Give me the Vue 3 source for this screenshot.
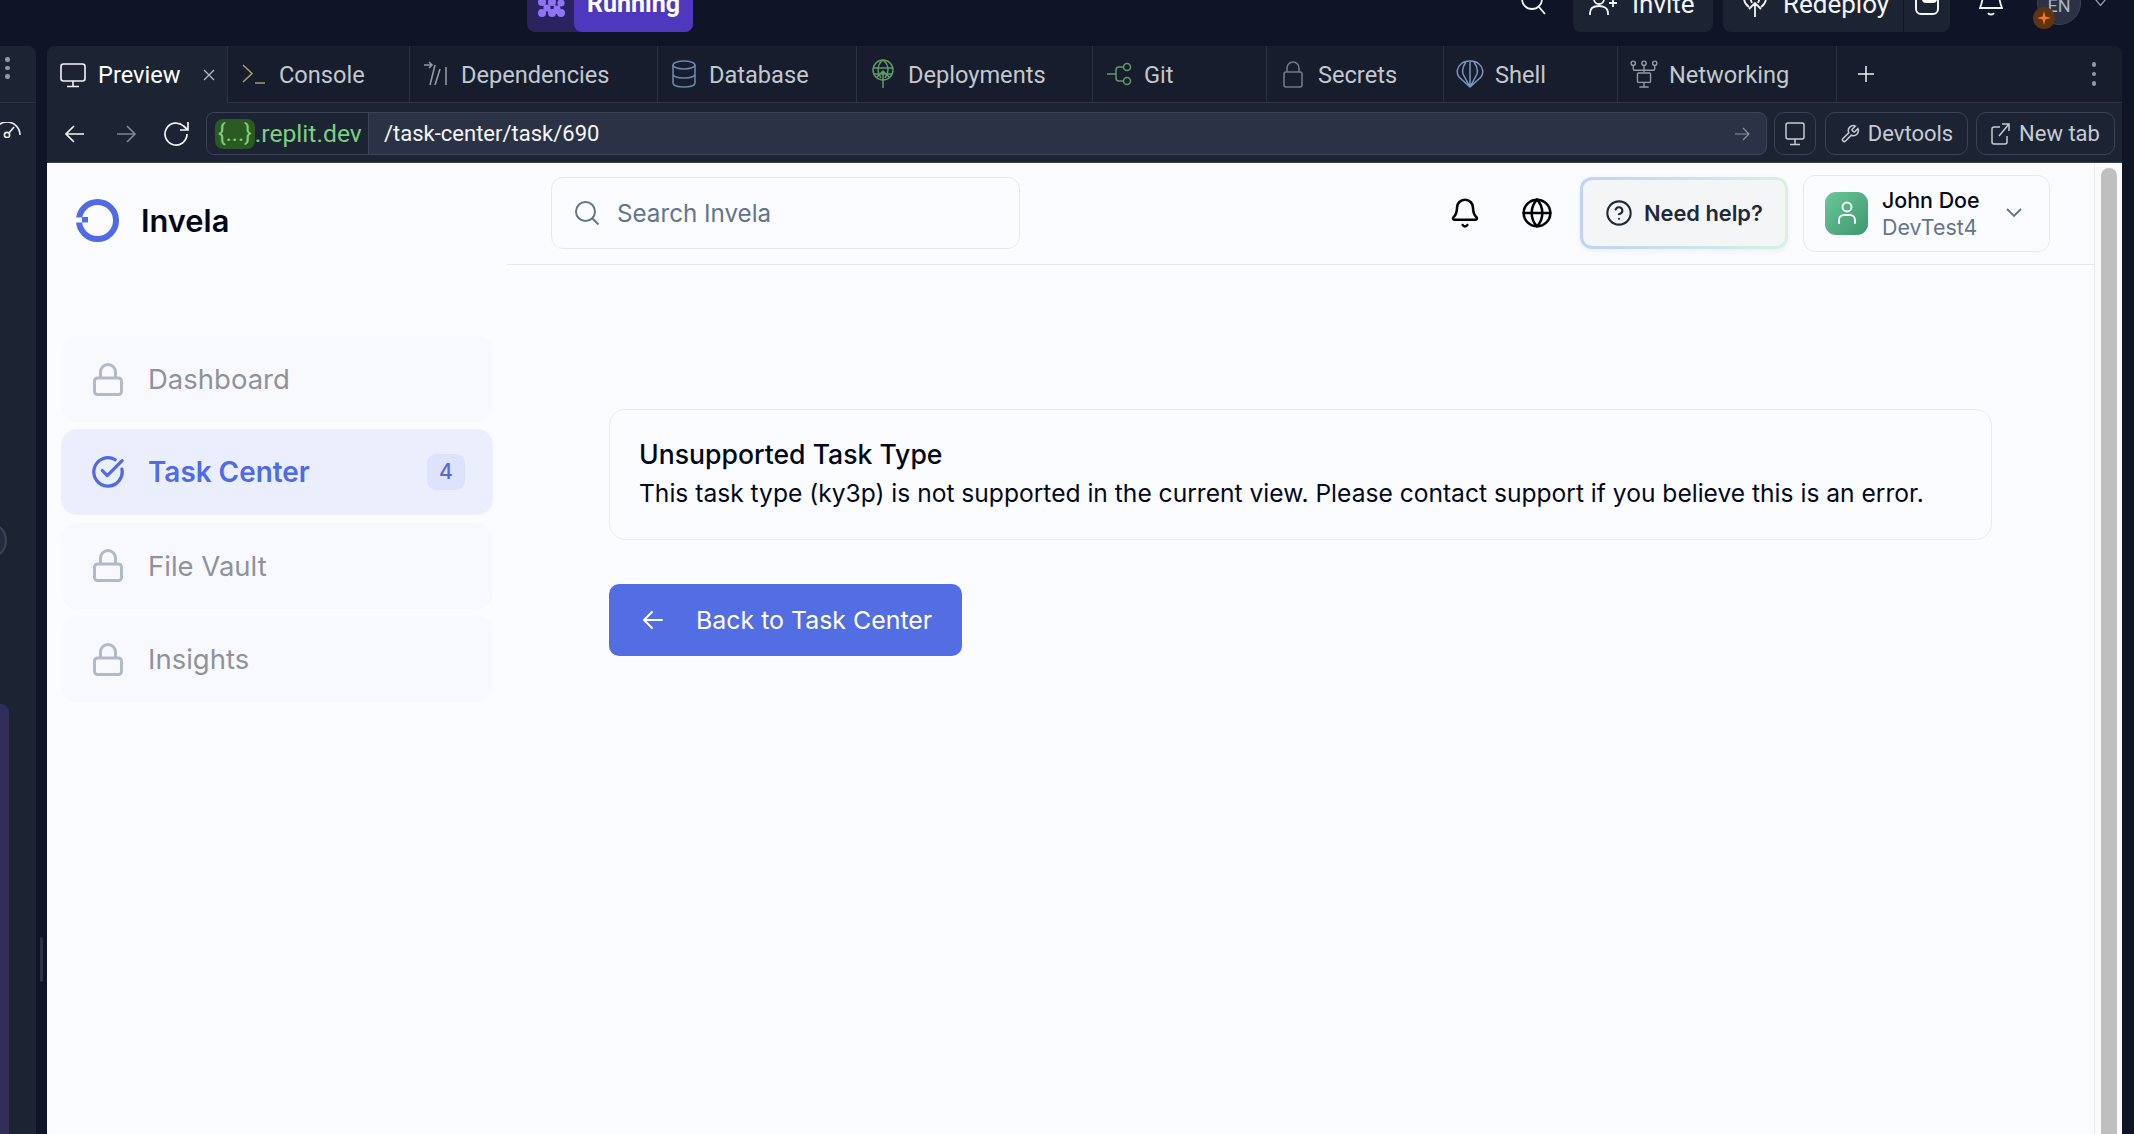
<script setup>
const tabs = [
  { name: 'Preview', icon: 'monitor', width: 181, active: true },
  { name: 'Console', icon: 'console', width: 182 },
  { name: 'Dependencies', icon: 'deps', width: 248 },
  { name: 'Database', icon: 'db', width: 199 },
  { name: 'Deployments', icon: 'deploy', width: 236 },
  { name: 'Git', icon: 'git', width: 174 },
  { name: 'Secrets', icon: 'lock', width: 177 },
  { name: 'Shell', icon: 'shell', width: 174 },
  { name: 'Networking', icon: 'net', width: 219 },
]

const navItems = [
  { name: 'Dashboard', locked: true },
  { name: 'Task Center', active: true, count: 4 },
  { name: 'File Vault', locked: true },
  { name: 'Insights', locked: true },
]
</script>

<template>
  <div class="page">
    <header class="topbar">
      <div class="run-btn">
        <span class="run-icon">
          <svg width="28" height="17" viewBox="0 0 28 17" fill="#8f74f5" stroke="#8f74f5" stroke-width="2">
            <circle cx="5" cy="2" r="3" /><circle cx="15" cy="2" r="3" /><circle cx="24" cy="3" r="2.600" />
            <path d="M5 2l5 6 5-6M15 2l5 7 4-6M10 8l-5 5M20 9l-5 4 9 0" fill="none" />
            <circle cx="10" cy="8" r="2.600" /><circle cx="20" cy="9" r="2.600" />
            <circle cx="5" cy="13" r="3" /><circle cx="15" cy="13" r="3" /><circle cx="24" cy="13" r="3" />
          </svg>
        </span>
        <span class="run-label">Running</span>
      </div>
      <div class="top-right">
        <svg class="top-search" width="28" height="28" viewBox="0 0 28 28" fill="none" stroke="#f2f4f7" stroke-width="1.800">
          <circle cx="12" cy="12" r="10" /><path d="m19 20 6 7" />
        </svg>
        <div class="top-btn invite">
          <svg width="30" height="20" viewBox="0 0 30 20" fill="none" stroke="#f2f4f7" stroke-width="1.800">
            <circle cx="11" cy="4" r="5" /><path d="M2 20v-2c0-5 4-7 9-7s9 2 9 7v2M21 8h8M25 4v8" />
          </svg>
          <span>Invite</span>
        </div>
        <div class="top-btn redeploy">
          <div class="redeploy-main">
            <svg width="24" height="19" viewBox="0 0 24 19" fill="none" stroke="#f2f4f7" stroke-width="1.800">
              <path d="M1 0c0 4 2 7 5 9M23 0c0 4-2 7-5 9M7 0l2 5M17 0l-2 5M12 19V5M6 11l6-6 6 6" />
            </svg>
            <span>Redeploy</span>
          </div>
          <div class="redeploy-side">
            <span class="blob-box"><i class="blob"></i></span>
          </div>
        </div>
        <svg class="top-bell" width="24" height="26" viewBox="0 0 24 26" fill="none" stroke="#f2f4f7" stroke-width="1.800">
          <path d="M4 3c0 6-1 10-3 15h22c-2-5-3-9-3-15M9 23c1 2 5 2 6 0" />
        </svg>
        <div class="en-avatar">
          <span>EN</span>
          <i class="en-badge">
            <svg width="14" height="14" viewBox="0 0 14 14" fill="#f5752b"><path d="M7 0 8.400 5.600 14 7 8.400 8.400 7 14 5.600 8.400 0 7 5.600 5.600Z" /></svg>
          </i>
        </div>
        <svg class="top-chev" width="11" height="7" viewBox="0 0 11 7" fill="none" stroke="#9aa3b2" stroke-width="1.200">
          <path d="m.5.500 5 6 5-6" />
        </svg>
      </div>
    </header>

    <div class="workspace">
      <aside class="rail">
        <div class="rail-head">
          <i></i><i></i><i></i>
        </div>
        <svg class="rail-gauge" width="22" height="16" viewBox="0 0 22 16" fill="none" stroke="#e6e8ec" stroke-width="1.700">
          <path d="M-6 13A13 13 0 0 1 20 13M9 11l5-6" />
          <circle cx="7" cy="13" r="2.600" />
        </svg>
        <div class="rail-circle"></div>
        <div class="rail-purple"></div>
      </aside>

      <div class="splitter"><i></i></div>

      <section class="panel">
        <div class="tabstrip">
          <div
            v-for="tab in tabs"
            :key="tab.name"
            :class="['tab', { 'tab--active': tab.active }]"
            :style="{ width: tab.width + 'px' }"
          >
            <span class="tab-icon">
              <svg v-if="tab.icon === 'monitor'" width="26" height="26" viewBox="0 0 26 26" fill="none" stroke="#f4f6f8" stroke-width="1.600">
                <rect x="1" y="2" width="24" height="17" rx="2.500" /><path d="M13 19v5M7 24.500h12" />
              </svg>
              <svg v-else-if="tab.icon === 'console'" width="24" height="24" viewBox="0 0 24 24" fill="none" stroke="#a89b62" stroke-width="1.600">
                <path d="m1 3 9 8.500L1 20M13 21h10" />
              </svg>
              <svg v-else-if="tab.icon === 'deps'" width="24" height="26" viewBox="0 0 24 26" fill="none" stroke="#9299a4" stroke-width="1.600">
                <path d="M0 4h8M5 1l3 3-3 3M11 4 6 24M16 8l-5 16M22 6v18" />
              </svg>
              <svg v-else-if="tab.icon === 'db'" width="26" height="28" viewBox="0 0 26 28" fill="none" stroke="#6787ab" stroke-width="1.600">
                <ellipse cx="13" cy="5" rx="11" ry="4" /><path d="M2 5v18c0 2.500 5 4 11 4s11-1.500 11-4V5M2 14c0 2.500 5 4 11 4s11-1.500 11-4" />
              </svg>
              <svg v-else-if="tab.icon === 'deploy'" width="24" height="30" viewBox="0 0 24 30" fill="none" stroke="#5f9b66" stroke-width="1.500">
                <circle cx="12" cy="11" r="10" /><path d="M12 1c-4 3-5 7-5 10s2 6 3 8M12 1c4 3 5 7 5 10s-2 6-3 8M2 9h20M3 15h18M12 12v17M6 18l6-6 6 6" />
              </svg>
              <svg v-else-if="tab.icon === 'git'" width="26" height="26" viewBox="0 0 26 26" fill="none" stroke="#5f9b66" stroke-width="1.500">
                <circle cx="21" cy="6" r="3.500" /><circle cx="21" cy="20" r="3.500" /><path d="M1 13h9M17.500 6H13a3 3 0 0 0-3 3v8a3 3 0 0 0 3 3h4.500" />
              </svg>
              <svg v-else-if="tab.icon === 'lock'" width="20" height="28" viewBox="0 0 20 28" fill="none" stroke="#727884" stroke-width="1.600">
                <rect x="1" y="12" width="18" height="15" rx="2" /><path d="M4 12V8a6 6 0 0 1 12 0v4" />
              </svg>
              <svg v-else-if="tab.icon === 'shell'" width="28" height="28" viewBox="0 0 28 28" fill="none" stroke="#7b96bb" stroke-width="1.500">
                <path d="M14 27 3 17C0 13 1 7 5 4c2-2 6-3 9-3s7 1 9 3c4 3 5 9 2 13ZM14 27 7 14c-1-4 0-8 3-12M14 27V2M14 27l7-13c1-4 0-8-3-12" />
              </svg>
              <svg v-else width="30" height="30" viewBox="0 0 30 30" fill="none" stroke="#949aa5" stroke-width="1.500">
                <circle cx="3.500" cy="3.500" r="2.300" /><circle cx="15" cy="3.500" r="2.300" /><circle cx="26.500" cy="3.500" r="2.300" />
                <path d="M3.500 6v3a2 2 0 0 0 2 2h19a2 2 0 0 0 2-2V6M15 6v7" /><rect x="8" y="14" width="14" height="10" rx="1" /><path d="M15 24v4M10 29h10" />
              </svg>
            </span>
            <span class="tab-name">{{ tab.name }}</span>
            <svg v-if="tab.active" class="tab-close" width="12" height="12" viewBox="0 0 12 12" stroke="#b4bac4" stroke-width="1.300">
              <path d="m1 1 10 10M11 1 1 11" />
            </svg>
          </div>
          <div class="tab-add">
            <svg width="16" height="16" viewBox="0 0 16 16" stroke="#f0f2f5" stroke-width="1.500"><path d="M8 0v16M0 8h16" /></svg>
          </div>
          <div class="tab-more"><i></i><i></i><i></i></div>
        </div>

        <div class="addressbar">
          <svg class="nav-arrow" width="22" height="22" viewBox="0 0 22 22" fill="none" stroke="#f4f6f8" stroke-width="1.700">
            <path d="M20 11H2M10 3l-8 8 8 8" />
          </svg>
          <svg class="nav-arrow nav-arrow--off" width="22" height="22" viewBox="0 0 22 22" fill="none" stroke="#7f8693" stroke-width="1.700">
            <path d="M2 11h18M12 3l8 8-8 8" />
          </svg>
          <svg class="nav-reload" width="28" height="28" viewBox="0 0 28 28" fill="none" stroke="#f4f6f8" stroke-width="1.700">
            <path d="M24 14a11 11 0 1 1-3.500-8L25 10M25 2v8h-8" />
          </svg>
          <div class="urlbox">
            <div class="url-domain"><span class="url-mask">{...}</span><span>.replit.dev</span></div>
            <div class="url-path">/task-center/task/690</div>
            <svg class="url-go" width="16" height="16" viewBox="0 0 16 16" fill="none" stroke="#8b919e" stroke-width="1.200">
              <path d="M1 8h14M9 2l6 6-6 6" />
            </svg>
          </div>
          <button class="bar-btn bar-btn--icon">
            <svg width="20" height="26" viewBox="0 0 20 26" fill="none" stroke="#c6cbd3" stroke-width="1.500">
              <rect x="1" y="2" width="18" height="16" rx="2" /><path d="M10 18v5M5 23.500h10" />
            </svg>
          </button>
          <button class="bar-btn bar-btn--dev">
            <svg width="20" height="24" viewBox="0 0 24 24" fill="none" stroke="#c6cbd3" stroke-width="1.800">
              <path d="M14.700 6.300a1 1 0 0 0 0 1.400l1.600 1.600a1 1 0 0 0 1.400 0l3.770-3.770a6 6 0 0 1-7.940 7.940l-6.910 6.910a2.120 2.120 0 0 1-3-3l6.910-6.910a6 6 0 0 1 7.940-7.940l-3.760 3.760z" />
            </svg>
            <span>Devtools</span>
          </button>
          <button class="bar-btn bar-btn--new">
            <svg width="19" height="24" viewBox="0 0 19 24" fill="none" stroke="#c6cbd3" stroke-width="1.500">
              <path d="M9 5H3a2 2 0 0 0-2 2v13a2 2 0 0 0 2 2h11a2 2 0 0 0 2-2v-6M8 14 18 2M11 2h7v7" />
            </svg>
            <span>New tab</span>
          </button>
        </div>

        <div class="viewport">
          <div class="app">
            <aside class="sidebar">
              <div class="brand">
                <svg width="43" height="43" viewBox="0 0 43 43">
                  <circle cx="21.500" cy="21.500" r="18.500" fill="none" stroke="#4f6be6" stroke-width="6" />
                  <rect x="0" y="18.500" width="12" height="5" fill="#fbfcff" />
                  <rect x="6" y="18" width="6" height="5.500" fill="#4f6be6" />
                </svg>
                <span>Invela</span>
              </div>
              <nav class="nav">
                <a
                  v-for="item in navItems"
                  :key="item.name"
                  :class="['nav-item', { 'nav-item--active': item.active }]"
                >
                  <span class="nav-icon">
                    <svg v-if="item.locked" width="30" height="33" viewBox="0 0 30 33" fill="none" stroke="#b2bac8" stroke-width="3">
                      <rect x="1.500" y="15" width="27" height="16.500" rx="3" /><path d="M7.500 15V9a7.500 7.500 0 0 1 15 0v6" />
                    </svg>
                    <svg v-else width="36" height="36" viewBox="0 0 24 24" fill="none" stroke="#4f6be6" stroke-width="2.300" stroke-linecap="round" stroke-linejoin="round">
                      <path d="M21.800 10A10 10 0 1 1 17 3.300" /><path d="m8 11 3.500 3.500L22 4" />
                    </svg>
                  </span>
                  <span class="nav-name">{{ item.name }}</span>
                  <span v-if="item.count" class="nav-count">{{ item.count }}</span>
                </a>
              </nav>
            </aside>

            <div class="content">
              <div class="header">
                <div class="search">
                  <svg width="26" height="26" viewBox="0 0 26 26" fill="none" stroke="#64748b" stroke-width="2">
                    <circle cx="11.500" cy="11.500" r="9.500" /><path d="m18.500 18.500 6 6" />
                  </svg>
                  <span>Search Invela</span>
                </div>
                <div class="header-right">
                  <svg class="hd-bell" width="32" height="32" viewBox="0 0 24 24" fill="none" stroke="#000" stroke-width="1.900" stroke-linecap="round" stroke-linejoin="round">
                    <path d="M10.300 21a1.900 1.900 0 0 0 3.400 0" /><path d="M3.300 15.300A1 1 0 0 0 4 17h16a1 1 0 0 0 .7-1.700C19.400 14 18 12.500 18 8A6 6 0 0 0 6 8c0 4.500-1.400 6-2.700 7.300" />
                  </svg>
                  <svg class="hd-globe" width="32" height="32" viewBox="0 0 24 24" fill="none" stroke="#000" stroke-width="1.900" stroke-linecap="round" stroke-linejoin="round">
                    <circle cx="12" cy="12" r="10" /><path d="M12 2a14.500 14.500 0 0 0 0 20 14.500 14.500 0 0 0 0-20M2 12h20" />
                  </svg>
                  <button class="help">
                    <svg width="28" height="28" viewBox="0 0 24 24" fill="none" stroke="#1f2937" stroke-width="1.800" stroke-linecap="round" stroke-linejoin="round">
                      <circle cx="12" cy="12" r="10" /><path d="M9.100 9a3 3 0 0 1 5.800 1c0 2-3 3-3 3M12 17h.01" />
                    </svg>
                    <span>Need help?</span>
                  </button>
                  <div class="user">
                    <div class="avatar">
                      <svg width="20" height="26" viewBox="0 0 20 26" fill="none" stroke="#fff" stroke-width="1.900" stroke-linecap="round">
                        <circle cx="10" cy="7" r="4.500" /><path d="M2 23v-3a5 5 0 0 1 5-5h6a5 5 0 0 1 5 5v3" />
                      </svg>
                    </div>
                    <div class="user-text">
                      <strong>John Doe</strong>
                      <span>DevTest4</span>
                    </div>
                    <svg class="user-chev" width="16" height="10" viewBox="0 0 16 10" fill="none" stroke="#64748b" stroke-width="1.800">
                      <path d="m1 1 7 7 7-7" />
                    </svg>
                  </div>
                </div>
              </div>

              <main class="main">
                <div class="notice">
                  <h2>Unsupported Task Type</h2>
                  <p>This task type (ky3p) is not supported in the current view. Please contact support if you believe this is an error.</p>
                </div>
                <button class="back">
                  <svg width="20" height="20" viewBox="0 0 20 20" fill="none" stroke="#fff" stroke-width="1.900" stroke-linecap="round" stroke-linejoin="round">
                    <path d="M19 10H1M9 2l-8 8 8 8" />
                  </svg>
                  <span>Back to Task Center</span>
                </button>
              </main>
            </div>
            <div class="scrollbar"><i></i></div>
          </div>
        </div>
      </section>
    </div>
  </div>
</template>

<style scoped>
.page {
  width: 2134px;
  height: 1134px;
  background: #0f1526;
  overflow: hidden;
  font-family: Roboto, "Noto Sans", sans-serif;
  color: #f2f4f7;
}

.topbar {
  height: 46px;
  box-sizing: border-box;
  padding-bottom: 14px;
  display: flex;
  align-items: flex-end;
  overflow: hidden;
}

.run-btn {
  margin-left: 527px;
  width: 166px;
  height: 56px;
  flex: none;
  display: flex;
  background: #2b2260;
  border-radius: 0 0 8px 8px;
}

.run-icon {
  width: 47px;
  display: flex;
  justify-content: center;
  align-items: flex-end;
  padding-bottom: 15px;
  box-sizing: border-box;
}

.run-label {
  flex: 1;
  background: #4e38bd;
  border-radius: 0 0 8px 8px;
  text-align: center;
  font-size: 25px;
  font-weight: 700;
  line-height: 56px;
  color: #fff;
}

.top-right {
  margin-left: auto;
  display: flex;
  align-items: flex-end;
}

.top-search {
  flex: none;
  margin: 0 25px 17px 0;
}

.top-btn {
  height: 56px;
  background: #1c2333;
  border-radius: 0 0 8px 8px;
  display: flex;
  align-items: center;
  font-size: 26px;
  flex: none;
}

.invite {
  width: 140px;
  padding-left: 15px;
  box-sizing: border-box;
  gap: 14px;
  margin-right: 10px;
}

.invite svg {
  align-self: flex-end;
  margin-bottom: 17px;
}

.redeploy {
  width: 227px;
  margin-right: 29px;
}

.redeploy-main {
  width: 181px;
  height: 100%;
  box-sizing: border-box;
  padding-left: 20px;
  display: flex;
  align-items: center;
  gap: 16px;
  border-right: 1px solid #0f1526;
}

.redeploy-main svg {
  align-self: flex-end;
  margin-bottom: 15px;
}

.redeploy-side {
  flex: 1;
  height: 100%;
  display: flex;
  justify-content: center;
  align-items: flex-end;
  padding-bottom: 17px;
  box-sizing: border-box;
}

.blob-box {
  width: 24px;
  height: 28px;
  box-sizing: border-box;
  border: 2px solid #f2f4f7;
  border-radius: 6px;
  overflow: hidden;
  display: flex;
  justify-content: flex-end;
}

.blob {
  width: 15px;
  height: 14px;
  background: #fff;
  border-radius: 4px;
}

.top-bell {
  flex: none;
  margin: 0 34px 16px 0;
}

.en-avatar {
  position: relative;
  flex: none;
  width: 44px;
  height: 44px;
  border-radius: 50%;
  background: #2b3245;
  border: 1px solid #3c4356;
  box-sizing: border-box;
  margin-bottom: 7px;
  padding-top: 4px;
  display: flex;
  justify-content: center;
  align-items: center;
  font-size: 18px;
  color: #aeb4bf;
}

.en-badge {
  position: absolute;
  left: -5px;
  top: 25px;
  width: 22px;
  height: 22px;
  border-radius: 50%;
  background: #5e3511;
  display: flex;
  justify-content: center;
  align-items: center;
}

.top-chev {
  flex: none;
  margin: 0 28px 26px 14px;
}

.workspace {
  height: 1088px;
  display: flex;
}

.rail {
  width: 36px;
  flex: none;
  background: #1c2333;
  border-radius: 0 8px 0 0;
  display: flex;
  flex-direction: column;
  overflow: hidden;
}

.rail-head {
  height: 57px;
  flex: none;
  box-sizing: border-box;
  border-bottom: 1px solid #2b3245;
  padding: 11px 0 0 5px;
  display: flex;
  flex-direction: column;
  gap: 4px;
}

.rail-head i,
.tab-more i {
  width: 4.500px;
  height: 4.500px;
  border-radius: 50%;
  background: #9298a3;
}

.rail-gauge {
  flex: none;
  margin-top: 19px;
  overflow: hidden;
}

.rail-circle {
  width: 28px;
  height: 33px;
  flex: none;
  margin: 386px 0 0 -21px;
  border-radius: 50%;
  border: 2px solid #3c4356;
  box-sizing: border-box;
  background: #262c3d;
}

.rail-purple {
  margin-top: auto;
  width: 9px;
  height: 430px;
  flex: none;
  background: #312c58;
  border-radius: 0 8px 0 0;
}

.splitter {
  width: 11px;
  flex: none;
  display: flex;
  justify-content: center;
  padding-top: 891px;
  box-sizing: border-box;
}

.splitter i {
  width: 3px;
  height: 45px;
  background: #2b3245;
  border-radius: 2px;
}

.panel {
  width: 2075px;
  flex: none;
  display: flex;
  flex-direction: column;
  background: #1c2333;
  border-radius: 8px 8px 0 0;
  overflow: hidden;
}

.tabstrip {
  height: 57px;
  flex: none;
  display: flex;
  background: #171d2c;
  border-bottom: 1px solid #2b3245;
  box-sizing: border-box;
}

.tab {
  flex: none;
  box-sizing: border-box;
  padding-left: 12px;
  display: flex;
  align-items: center;
  gap: 11px;
  border-right: 1px solid #2b3245;
  color: #c2c8ce;
  font-size: 23.600px;
}

.tab-name {
  padding-top: 1px;
}

.tab--active {
  background: #1c2333;
  color: #fff;
  margin-bottom: -1px;
}

.tab-icon {
  width: 28px;
  flex: none;
  display: flex;
  justify-content: center;
}

.tab-close {
  margin-left: auto;
  margin-right: 12px;
}

.tab-add {
  width: 58px;
  display: flex;
  justify-content: center;
  align-items: center;
}

.tab-more {
  margin-left: auto;
  margin-right: 26px;
  display: flex;
  flex-direction: column;
  justify-content: center;
  gap: 5px;
}

.addressbar {
  height: 59px;
  flex: none;
  display: flex;
  align-items: center;
  box-sizing: border-box;
  padding-top: 2px;
}

.nav-arrow {
  margin-left: 17px;
  flex: none;
}

.nav-arrow--off {
  margin-left: 29px;
}

.nav-reload {
  margin-left: 26px;
  flex: none;
}

.urlbox {
  margin-left: 15px;
  width: 1561px;
  height: 43px;
  flex: none;
  box-sizing: border-box;
  background: #2b3245;
  border: 1px solid #3c4356;
  border-radius: 8px;
  display: flex;
  align-items: center;
  font-size: 22px;
  overflow: hidden;
}

.url-domain {
  width: 162px;
  height: 100%;
  flex: none;
  background: #1c2333;
  border-right: 1px solid #3c4356;
  box-sizing: border-box;
  padding-left: 8px;
  display: flex;
  align-items: center;
  font-size: 24.700px;
  color: #7ed07e;
}

.url-mask {
  background: #2a5a22;
  border-radius: 8px;
  padding: 0 3px;
  height: 30px;
  font-size: 23px;
  line-height: 29px;
}

.url-path {
  margin-left: 15px;
  color: #f4f6f8;
}

.url-go {
  margin-left: auto;
  margin-right: 16px;
}

.bar-btn {
  height: 43px;
  flex: none;
  box-sizing: border-box;
  background: transparent;
  border: 1px solid #3c4356;
  border-radius: 10px;
  display: flex;
  align-items: center;
  justify-content: center;
  font-family: inherit;
  font-size: 22px;
  color: #c6cbd3;
  padding: 0;
}

.bar-btn--icon {
  width: 42px;
  margin-left: 7px;
}

.bar-btn--dev {
  width: 143px;
  margin-left: 9px;
  gap: 8px;
}

.bar-btn--new {
  width: 139px;
  margin-left: 8px;
  gap: 9px;
}

.viewport {
  flex: 1;
  min-height: 0;
  border-top: 1px solid #3c4356;
}

.app {
  height: 100%;
  display: flex;
  background: #fbfcff;
  font-family: Inter, sans-serif;
  color: #020817;
}

.sidebar {
  width: 460px;
  flex: none;
}

.brand {
  padding: 36px 0 0 29px;
  display: flex;
  align-items: center;
  gap: 22px;
  font-size: 30.800px;
  font-weight: 600;
}

.nav {
  margin-top: 94px;
  padding: 0 14px;
  display: flex;
  flex-direction: column;
  gap: 7.400px;
}

.nav-item {
  height: 86px;
  box-sizing: border-box;
  padding: 0 28px 0 30px;
  display: flex;
  align-items: center;
  background: #f8f9fd;
  border-radius: 16px;
  color: #8f929c;
  font-size: 27.500px;
}

.nav-item--active {
  background: #ebeffd;
  color: #4f6be6;
  font-size: 27.900px;
  font-weight: 600;
}

.nav-icon {
  width: 34px;
  flex: none;
  display: flex;
  justify-content: center;
  margin-right: 23px;
}

.nav-count {
  margin-left: auto;
  width: 38px;
  height: 36px;
  border-radius: 9px;
  background: #dde3fb;
  text-align: center;
  line-height: 36px;
  font-size: 21px;
  font-weight: 500;
}

.content {
  flex: 1;
  min-width: 0;
  display: flex;
  flex-direction: column;
}

.header {
  height: 99px;
  flex: none;
  box-sizing: content-box;
  border-bottom: 1px solid #e4e8ef;
  display: flex;
  align-items: center;
  padding: 0 44px 2px;
}

.search {
  width: 469px;
  height: 72px;
  box-sizing: border-box;
  border: 1px solid #e4e8ef;
  border-radius: 12px;
  padding: 1px 0 0 22px;
  display: flex;
  align-items: center;
  gap: 17px;
  font-size: 24.200px;
  color: #64748b;
}

.header-right {
  margin-left: auto;
  display: flex;
  align-items: center;
}

.hd-globe {
  margin-left: 40px;
}

.help {
  margin-left: 27px;
  width: 208px;
  height: 72px;
  box-sizing: border-box;
  border: 3px solid transparent;
  border-radius: 12px;
  background: linear-gradient(#f4f5f7, #f4f5f7) padding-box, linear-gradient(90deg, #bfd2f8, #d8f1e2) border-box;
  box-shadow: 0 2px 6px rgba(0, 0, 0, 0.06);
  display: flex;
  align-items: center;
  gap: 11px;
  padding: 0 0 0 22px;
  font-family: inherit;
  font-size: 21.800px;
  font-weight: 600;
  color: #1f2937;
}

.user {
  margin: 1px 0 0 15px;
  width: 247px;
  height: 77px;
  box-sizing: border-box;
  border: 1px solid #e4e8ef;
  border-radius: 12px;
  padding-left: 21px;
  display: flex;
  align-items: center;
}

.avatar {
  width: 43px;
  height: 43px;
  flex: none;
  border-radius: 11px;
  background: linear-gradient(135deg, #6bc899, #3f9670);
  display: flex;
  align-items: center;
  justify-content: center;
}

.user-text {
  margin-left: 14px;
  display: flex;
  flex-direction: column;
  gap: 1px;
  font-size: 21.400px;
  line-height: 26px;
}

.user-text strong {
  font-weight: 500;
}

.user-text span {
  color: #64748b;
}

.user-chev {
  margin-left: auto;
  margin-right: 27px;
}

.main {
  padding: 144px 102px 0;
}

.notice {
  height: 131px;
  box-sizing: border-box;
  border: 1px solid #e9ecf2;
  border-radius: 16px;
  padding: 28px 29px 0;
}

.notice h2 {
  margin: 0;
  font-size: 26.600px;
  line-height: 32px;
  font-weight: 500;
}

.notice p {
  margin: 8px 0 0;
  font-size: 24.580px;
  line-height: 30px;
  color: #020817;
}

.back {
  margin-top: 44px;
  width: 353px;
  height: 72px;
  border: none;
  border-radius: 10px;
  background: #536ee3;
  display: flex;
  align-items: center;
  gap: 33px;
  padding: 0 0 0 34px;
  font-family: inherit;
  font-size: 24.900px;
  font-weight: 400;
  color: #fff;
}

.scrollbar {
  width: 28px;
  flex: none;
  box-sizing: border-box;
  background: #fafafa;
  border-left: 1px solid #ececec;
  padding: 5px 5px 0 6px;
}

.scrollbar i {
  display: block;
  height: 100%;
  background: #bfbfbf;
  border-radius: 8px 8px 0 0;
}
</style>
